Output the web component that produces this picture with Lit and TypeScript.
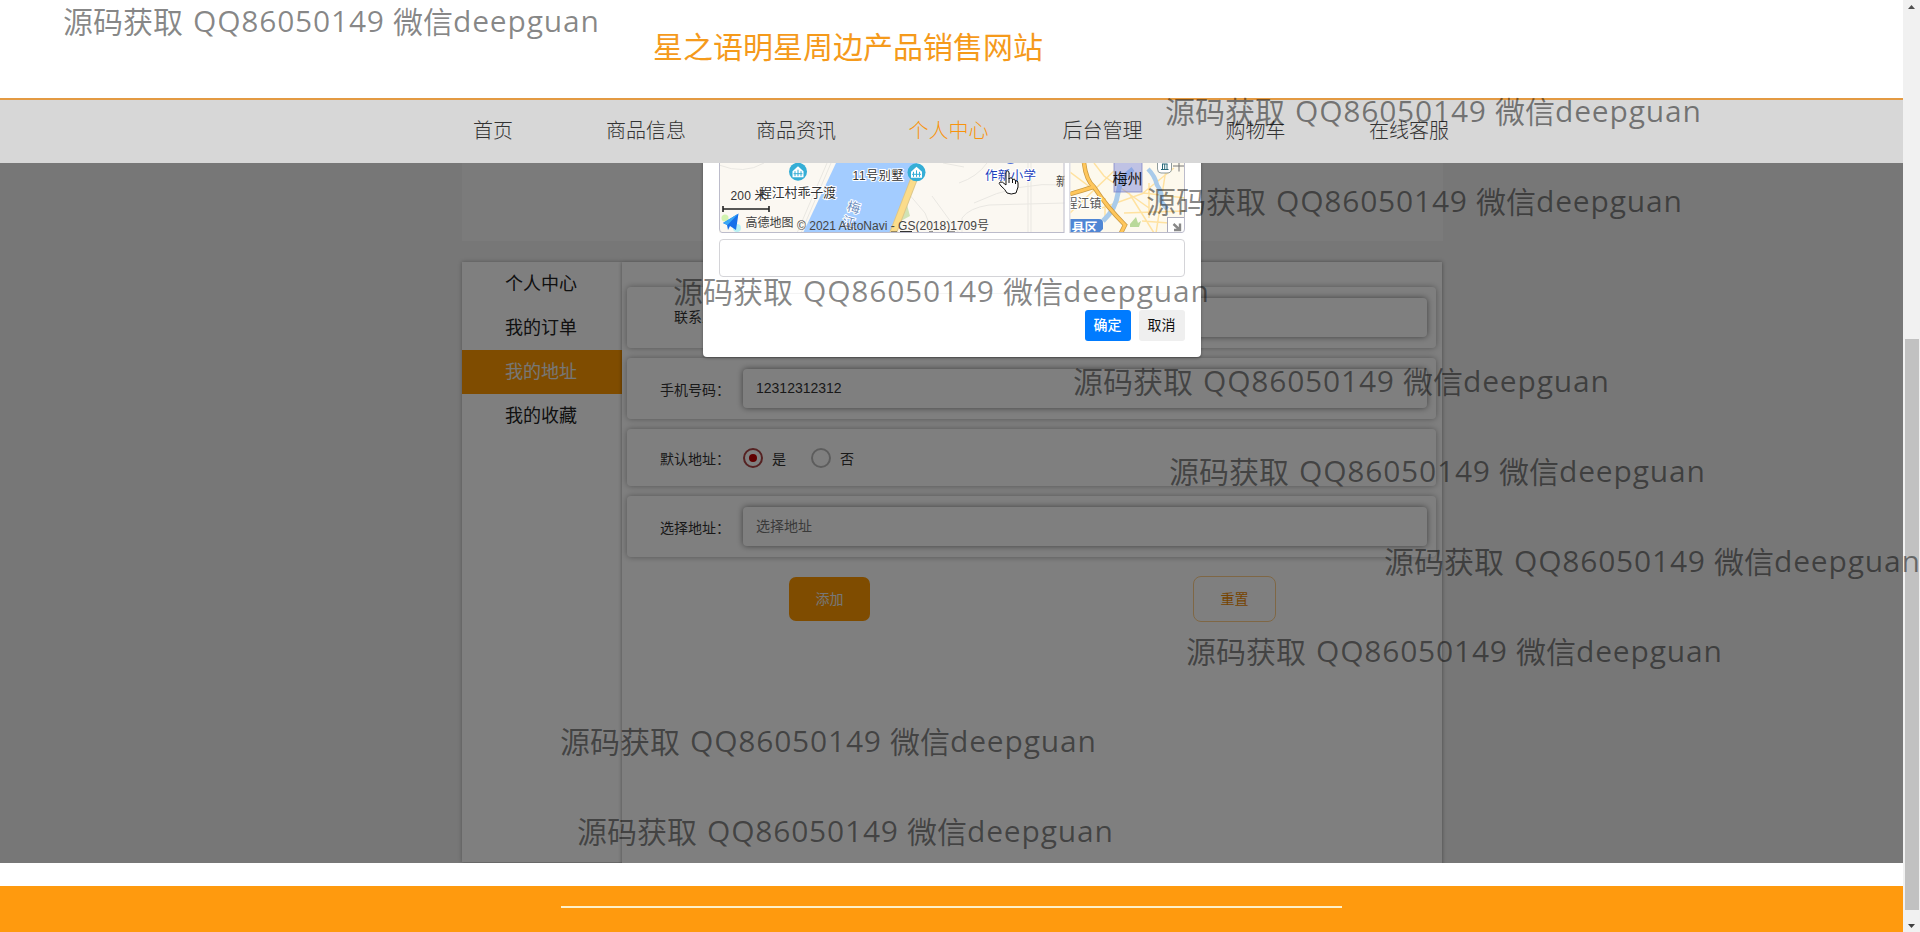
import { LitElement, html, css, svg } from "lit";
import { customElement } from "lit/decorators.js";

const NAV = ["首页", "商品信息", "商品资讯", "个人中心", "后台管理", "购物车", "在线客服"];
const SIDE = ["个人中心", "我的订单", "我的地址", "我的收藏"];
const MARKS: [number, number][] = [
  [64, 22], [1166, 112], [1147, 202], [674, 292], [1074, 382],
  [1170, 472], [1385, 562], [1187, 652], [561, 742], [578, 832],
];

@customElement("amap-view")
class AmapView extends LitElement {
  static styles = css`
    :host { display: block; width: 466px; height: 70px; }
    svg { display: block; font-family: "Liberation Sans", "Noto Sans CJK SC", sans-serif; font-size: 12px; }
    .halo { paint-order: stroke; stroke: #fff; stroke-width: 2px; }
  `;
  pin(x: number, y: number) {
    return svg`<g transform="translate(${x} ${y})">
      <circle r="9" fill="#35aed6"/>
      <path d="M-5.5 -.5 L0 -5.5 L5.5 -.5 V5.5 H-5.5Z" fill="#fff"/>
      <path d="M-3 -.5V4.5M0 -2V4.5M3 -.5V4.5M-4.5 2H4.5" stroke="#35aed6" stroke-width="1"/>
    </g>`;
  }
  render() {
    return html`<svg width="466" height="70" viewBox="0 0 466 70">
      <defs>
        <clipPath id="a"><rect x="0" y="0" width="345.5" height="70"/></clipPath>
        <clipPath id="b"><rect x="351.500" y="0" width="114.500" height="70"/></clipPath>
      </defs>
      <g clip-path="url(#a)">
        <rect width="346" height="70" fill="#fbf8f2"/>
        <g fill="none" stroke="#e9e7e2">
          <path d="M108 0L78 70M112 0L82 70M0 2Q25 12 45 0M189 30L206 50L214 70M255 40Q300 18 346 22M240 20Q258 14 268 0M309 0V70M312 0V70M243 70V55Q250 45 270 42L346 40M213 33L240 70M224 0L245 4"/>
        </g>
        <path d="M187 38L191 53L180 59Z" fill="#d0e3b4"/>
        <path d="M117 0H198L172 70H84Z" fill="#a3ccff"/>
        <path d="M195 16L174 70" stroke="#dcc68a" stroke-width="7.500"/>
        <path d="M195 16L174 70" stroke="#fbdc8a" stroke-width="5.500"/>
        ${this.pin(79, 8.7)}${this.pin(197.5, 9.3)}
        <g fill="#6f8fc0" class="halo" font-size="13">
          <text x="128" y="49" transform="rotate(15 134 45)">梅</text>
          <text x="123" y="64" transform="rotate(15 130 60)">江</text>
        </g>
        <g fill="#333">
          <text class="halo" x="133.500" y="16.500" textLength="51">11号别墅</text>
          <text class="halo" x="40" y="33.500" font-size="13" textLength="77">程江村乖子渡</text>
          <text x="11.500" y="37" textLength="36">200 米</text>
        </g>
        <path d="M4 43V49M50 43V49M4 46H50" stroke="#222" stroke-width="1.600"/>
        <circle cx="6" cy="55" r="3.500" fill="#d2f3b0"/>
        <circle cx="18" cy="65" r="4" fill="#b7f1f5"/>
        <path d="M4 60L19.500 50.500L17 67L11 63L9 67L8 62Z" fill="#1670ea"/>
        <path d="M4 60L19.500 50.500L8.500 62Z" fill="#3aa8f5"/>
        <text x="26.500" y="63.500" fill="#3e3e3e" textLength="48">高德地图</text>
        <text x="78" y="67" fill="#444" textLength="192" lengthAdjust="spacingAndGlyphs">© 2021 AutoNavi - GS(2018)1709号</text>
        <path d="M161 69.500h9M172 69h6M181 68.500h12M196 69.500h7M210 69h4M219 69.500h5M228 69h8" stroke="#333" stroke-width="1"/>
        <circle cx="291.500" cy="-6" r="7" fill="#4a6ed8"/>
        <text class="halo" x="266" y="17" fill="#1d3fbd" font-size="12.500" textLength="51">作新小学</text>
        <text x="337" y="22.500" fill="#444">新</text>
        <path d="M287 22V10Q287 8 288.500 8Q290 8 290 10V16L291 15Q293 14 293.500 16.500Q296 15 296.500 18Q299 17 299 20V24Q298 27 297 30Q292 32 288 30Q286 26 282 23Q279 20 281 19Q283 18 287 22Z" fill="#fff" stroke="#111"/>
        <path d="M290 15V20M293.500 16V20M296.500 18V21" stroke="#111"/>
      </g>
      <path d="M.5 0V66Q.5 69.500 3 69.500H345M345 0V70M351 0V70" fill="none" stroke="#bcbccb"/>
      <g clip-path="url(#b)">
        <rect x="351" width="115" height="70" fill="#fdf9ed"/>
        <g fill="none" stroke="#ffe2a0" stroke-width="1.500">
          <path d="M351 9L375 27L395 8M375 0L385 13L430 45M380 46L425 30L466 35M410 30L435 70M430 20V55M424 30L455 5M448 0L437 70M351 50L375 27M405 50L466 48M386 35V58M423 58L450 60"/>
        </g>
        <path d="M414 6Q401 15 399 30Q397 46 384 58" fill="none" stroke="#a9cbea" stroke-width="5"/>
        <path d="M429 6Q436 13 438 22Q444 30 442 38L448 46" fill="none" stroke="#a9cbea" stroke-width="4.500"/>
        <path d="M411 61L417 54L419 60L422 58L420 64H411Z" fill="#b9d99a"/>
        <path d="M365 0Q367 17 375 24Q388 44 406 62L402 70M351 31Q365 27 374 24" fill="none" stroke="#c99a43" stroke-width="4.500"/>
        <path d="M365 0Q367 17 375 24Q388 44 406 62L402 70M351 31Q365 27 374 24" fill="none" stroke="#ffc65a" stroke-width="3"/>
        <rect x="395" y="-2" width="28" height="31" fill="#6878d8" fill-opacity=".42" stroke="#777fc4" stroke-opacity=".7"/>
        <text x="393.500" y="20.500" font-size="15" fill="#111" textLength="30">梅州</text>
        <text x="346.500" y="44.500" font-size="12" fill="#555" textLength="36" class="halo">程江镇</text>
        <path d="M351 56H380Q384 56 384 60V66L380 70H351Z" fill="#4f86d4"/>
        <text x="352.500" y="68.500" font-size="13" fill="#fff" font-weight="700" textLength="26">县区</text>
        <path d="M438.500 -3V6Q438.500 10 442 10H448Q452.500 10 452.500 6V-3" fill="#fff" stroke="#8f9b9b"/>
        <path d="M442 6.500H449.500M443.500 6V1M445.700 6V1M448 6V1M443 1H448.500" stroke="#2a6a7a" fill="none"/>
        <path d="M454 3H465M460 0V8.500" stroke="#777"/>
        <rect x="448.500" y="54.500" width="18" height="16" fill="#fff" stroke="#aaaabb"/>
        <path d="M454.500 61L461 67M455 67H461V60.500" stroke="#888" stroke-width="2.400" fill="none"/>
      </g>
      <path d="M351 69.500H463Q465.500 69.500 465.500 66V0" fill="none" stroke="#bcbccb"/>
    </svg>`;
  }
}

@customElement("app-root")
class AppRoot extends LitElement {
  static styles = css`
    :host { display: block; position: relative; width: 1920px; height: 932px; overflow: hidden; background: #fff;
      font-family: "Liberation Sans", "Noto Sans CJK SC", sans-serif; font-size: 14px; color: #333; }
    * { box-sizing: border-box; }
    .window { display: flex; height: 932px; }
    .page { width: 1903px; display: flex; flex-direction: column; }
    .head { height: 98px; padding: 25px 0 0 653px; font-size: 30px; line-height: 46px; color: #f59a1b; }
    .nav { height: 65px; border-top: 2px solid #e39a43; background: #d7d7d7; padding-left: 417px; display: grid;
      grid-template-columns: 152px 154px 146px 159px 149px 157px 150px; text-align: center; font-size: 20px;
      font-weight: 300; line-height: 62px; color: #333; }
    .nav .on { color: #f8930c; }
    .stage { position: relative; height: 700px; background: #eeeeee; overflow: hidden; }
    .band { margin-left: 462px; width: 981px; height: 78px; background: #f6f6f6; }
    .body { margin: 21px 0 0 462px; width: 980px; height: 600px; display: flex; }
    .side { width: 160px; background: #fff; box-shadow: 0 0 4px rgba(0,0,0,.3); font-size: 18px; line-height: 44px; text-align: center; color: #222; }
    .side div { height: 44px; padding-right: 2px; }
    .side .on { background: #ff9900; color: #eee; }
    .main { width: 820px; height: 620px; background: #fff; box-shadow: 0 0 4px rgba(0,0,0,.4);
      padding: 25px 6px 0 5px; display: flex; flex-direction: column; gap: 10px; }
    .row { height: 61px; flex: none; border-radius: 4px; box-shadow: 0 0 6px rgba(0,0,0,.35); display: flex; align-items: center; }
    .row.short { height: 57px; }
    .label { width: 103px; text-align: right; }
    .row:first-child .label { padding-bottom: 4px; }
    .field { margin-left: 13px; width: 684px; height: 39px; border-radius: 4px; box-shadow: 0 0 6px rgba(0,0,0,.5);
      padding-left: 13px; line-height: 39px; }
    .hint { color: #757575; }
    .radio { margin-left: 13px; width: 20px; height: 20px; border-radius: 50%; border: 2px solid #bbb; display: flex;
      align-items: center; justify-content: center; }
    .radio.on { border-color: #a44; }
    .radio.on::after { content: ""; width: 8px; height: 8px; border-radius: 50%; background: #c00000; }
    .opt { margin-left: 9px; }
    .opt + .radio { margin-left: 25px; }
    .actions { display: flex; justify-content: space-between; align-items: center; padding: 0 160px 0 162px; height: 48px; margin-top: 8px; }
    .add { width: 81px; height: 44px; border-radius: 7px; background: #ff9900; color: #eee; line-height: 44px; text-align: center; }
    .reset { width: 83px; height: 46px; border-radius: 8px; border: 1px solid #ffcf8a; color: #ee8a00; line-height: 44px; text-align: center; }
    .mask { position: absolute; inset: 0; background: rgba(0,0,0,.5); }
    .modal { position: absolute; left: 703px; top: -4px; width: 498px; height: 198px; background: #fff; border-radius: 0 0 4px 4px;
      padding: 4px 16px 0; box-shadow: 0 1px 3px rgba(0,0,0,.35); }
    .text { margin-top: 6px; height: 38px; border: 1px solid #d4d4d8; border-radius: 4px; }
    .foot { margin-top: 16px; border-top: 1px solid #f4f4f4; padding-top: 16px; display: flex; justify-content: flex-end; gap: 8px; }
    .btn { width: 46px; height: 31px; border-radius: 3px; background: #efefef; color: #111; line-height: 31px; text-align: center; padding-right: 1px; }
    .btn.ok { background: #007bff; color: #fff; font-weight: 500; }
    .footer { margin-top: 23px; height: 46px; background: #ff9a0e; padding: 20px 0 0 561px; }
    .rule { width: 781px; height: 2px; background: #fff1c8; }
    .scroll { width: 17px; background: #f1f1f1; display: flex; flex-direction: column; align-items: center; }
    .scroll svg { display: block; flex: none; }
    .thumb { width: 14px; height: 571px; margin-top: 322px; background: #c1c1c1; }
    .marks { position: absolute; left: 0; top: 0; font-family: "Open Sans", "Noto Sans", "Noto Sans CJK SC", sans-serif; font-size: 30px; fill: #000; fill-opacity: .47; }
    .cjk { font-family: "Noto Sans CJK SC", sans-serif; }
  `;
  render() {
    return html`
      <div class="window">
        <div class="page">
          <div class="head">星之语明星周边产品销售网站</div>
          <div class="nav">${NAV.map((n, i) => html`<span class=${i === 3 ? "on" : ""}>${n}</span>`)}</div>
          <div class="stage">
            <div class="band"></div>
            <div class="body">
              <div class="side">${SIDE.map((n, i) => html`<div class=${i === 2 ? "on" : ""}>${n}</div>`)}</div>
              <div class="main">
                <div class="row"><div class="label">联系人：</div><div class="field"></div></div>
                <div class="row"><div class="label">手机号码：</div><div class="field">12312312312</div></div>
                <div class="row short"><div class="label">默认地址：</div><span class="radio on"></span><span class="opt">是</span><span class="radio"></span><span class="opt">否</span></div>
                <div class="row"><div class="label">选择地址：</div><div class="field hint">选择地址</div></div>
                <div class="actions"><div class="add">添加</div><div class="reset">重置</div></div>
              </div>
            </div>
            <div class="mask"></div>
            <div class="modal">
              <amap-view></amap-view>
              <div class="text"></div>
              <div class="foot"><div class="btn ok">确定</div><div class="btn">取消</div></div>
            </div>
          </div>
          <div class="footer"><div class="rule"></div></div>
        </div>
        <div class="scroll">
          <svg width="17" height="17"><path d="M5 9L8.500 5L12 9Z" fill="#505050"/></svg>
          <div class="thumb"></div>
          <svg width="17" height="22"><path d="M5 14L8.500 18L12 14Z" fill="#404040"/></svg>
        </div>
      </div>
      <svg class="marks" width="1920" height="932">
        ${MARKS.map(([x, y]) => svg`<g transform="translate(${x} ${y})">
          <text class="cjk" x="-1" y="11" textLength="120">源码获取</text>
          <text x="129" y="10" textLength="191">QQ86050149</text>
          <text class="cjk" x="329" y="11" textLength="60">微信</text>
          <text x="389" y="10" textLength="146">deepguan</text>
        </g>`)}
      </svg>`;
  }
}
